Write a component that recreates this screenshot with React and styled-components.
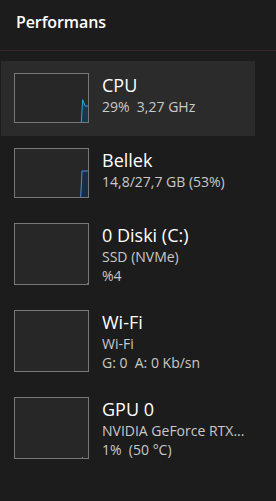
import React from "react";
import styled, { createGlobalStyle } from "styled-components";

const Global = createGlobalStyle`
  html, body { margin: 0; padding: 0; background: #1c1c1c; }
  body { width: 276px; height: 501px; overflow: hidden; font-family: "Open Sans", "Noto Sans", sans-serif; }
`;

const Page = styled.div`
  width: 276px;
  height: 501px;
  background: #1c1c1c;
  display: flex;
  flex-direction: column;
`;

const Header = styled.div`
  height: 51px;
  box-sizing: border-box;
  padding: 11px 0 0 16px;
  border-bottom: 1px solid #35282f;
`;

const Title = styled.h1`
  margin: 0;
  font-size: 16px;
  line-height: 22px;
  font-weight: 600;
  color: #ffffff;
  letter-spacing: -0.1px;
`;

const List = styled.div`
  display: flex;
  flex-direction: column;
  margin: 10px 0 0 1px;
  width: 254px;
`;

const Row = styled.div`
  display: flex;
  gap: 13px;
  padding: 12px 6px 13px 13px;
  background: ${(p) => (p.$selected ? "#2b2b2b" : "transparent")};
  min-width: 0;
`;

const Graph = styled.div`
  position: relative;
  flex: 0 0 auto;
  width: 75px;
  min-height: 50px;
  box-sizing: border-box;
  border: 1px solid #777777;
  background: #272727;
  overflow: hidden;
`;

const Chart = styled.svg`
  position: absolute;
  inset: 0;
  width: 100%;
  height: 100%;
`;

const Info = styled.div`
  display: flex;
  flex-direction: column;
  min-width: 0;
  flex: 1;
`;

const Name = styled.div`
  font-size: 18px;
  line-height: 24px;
  color: #ffffff;
  white-space: nowrap;
`;

const Sub = styled.div`
  font-size: 14px;
  line-height: 19px;
  color: #c9c9c9;
  white-space: pre;
  overflow: hidden;
  text-overflow: ellipsis;
`;

const rows = [
  {
    name: "CPU",
    lines: ["29%  3,27 GHz"],
    selected: true,
    chart: (
      <Chart viewBox="0 0 73 48" preserveAspectRatio="none">
        <path d="M66.3 48 L67.7 25.7 L69 29 L70 32 L73 32 L73 48 Z" fill="#17394a" />
        <path d="M66.3 48 L67.7 25.7 L69 29 L70 32 L73 32" fill="none" stroke="#2ea6d6" strokeWidth="1" />
      </Chart>
    ),
  },
  {
    name: "Bellek",
    lines: ["14,8/27,7 GB (53%)"],
    chart: (
      <Chart viewBox="0 0 73 48" preserveAspectRatio="none">
        <path d="M65.7 48 L67 22 L73 22 L73 48 Z" fill="#1a2b45" />
        <path d="M65.7 48 L67 22 L73 22" fill="none" stroke="#4a8ee6" strokeWidth="1" />
      </Chart>
    ),
  },
  {
    name: "0 Diski (C:)",
    lines: ["SSD (NVMe)", "%4"],
    chart: (
      <Chart viewBox="0 0 73 60">
        <rect x="72" y="59" width="1" height="1" fill="#6d6d6d" />
      </Chart>
    ),
  },
  { name: "Wi-Fi", lines: ["Wi-Fi", "G: 0  A: 0 Kb/sn"] },
  {
    name: "GPU 0",
    lines: ["NVIDIA GeForce RTX...", "1%  (50 °C)"],
    chart: (
      <Chart viewBox="0 0 73 60">
        <rect x="67" y="59" width="1" height="1" fill="#9a5ab0" />
      </Chart>
    ),
  },
];

export default function App() {
  return (
    <Page>
      <Global />
      <Header>
        <Title>Performans</Title>
      </Header>
      <List>
        {rows.map((r) => (
          <Row key={r.name} $selected={r.selected}>
            <Graph>{r.chart}</Graph>
            <Info>
              <Name>{r.name}</Name>
              {r.lines.map((l, i) => (
                <Sub key={i}>{l}</Sub>
              ))}
            </Info>
          </Row>
        ))}
      </List>
    </Page>
  );
}
